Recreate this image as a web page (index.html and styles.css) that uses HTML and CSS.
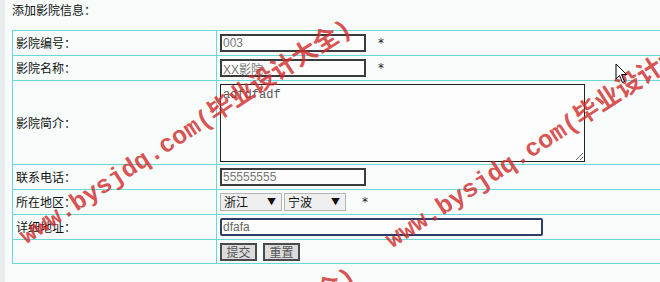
FILE: index.html
```html
<!DOCTYPE html>
<html lang="zh-CN">
<head>
  <meta charset="UTF-8">
  <title>添加影院信息</title>
  <link rel="stylesheet" href="styles.css">
</head>
<body>
  <div class="page">
    <div class="caption">添加影院信息：</div>

    <table class="form-table">
      <tr>
        <td class="label">影院编号：</td>
        <td class="field"><input class="text short" type="text" value="003"><span class="req">*</span></td>
      </tr>
      <tr>
        <td class="label">影院名称：</td>
        <td class="field"><input class="text short" type="text" value="XX影院"><span class="req">*</span></td>
      </tr>
      <tr class="tall">
        <td class="label">影院简介：</td>
        <td class="field"><textarea class="intro">adfdfadf</textarea></td>
      </tr>
      <tr>
        <td class="label">联系电话：</td>
        <td class="field"><input class="text short" type="text" value="55555555"></td>
      </tr>
      <tr>
        <td class="label">所在地区：</td>
        <td class="field">
          <span class="pick"><select><option>浙江</option></select></span><span class="pick"><select><option>宁波</option></select></span><span class="req req-wide">*</span>
        </td>
      </tr>
      <tr>
        <td class="label">详细地址：</td>
        <td class="field"><input class="text long focus" type="text" value="dfafa"></td>
      </tr>
      <tr class="last">
        <td class="label"></td>
        <td class="field"><button class="btn">提交</button><button class="btn">重置</button></td>
      </tr>
    </table>

    <!-- watermark -->
    <div class="mark mark-a">www.bysjdq.com(毕业设计大全)</div>
    <div class="mark mark-b">www.bysjdq.com(毕业设计大全)</div>
    <div class="mark mark-c">www.bysjdq.com(毕业设计大全)</div>

    <svg class="cursor" width="13" height="21" viewBox="0 0 13 21">
      <path d="M1 1 L1 16 L4.5 12.5 L7.5 19.5 L9.5 18.5 L6.5 11.5 L11.5 11.5 Z" fill="#fff" stroke="#000" stroke-width="1"/>
    </svg>
  </div>
</body>
</html>
```

FILE: styles.css
```css
html, body {
  margin: 0;
  padding: 0;
  height: 100%;
  overflow: hidden;
}

body {
  background: #f7fcfb;
  color: #111;
  font-family: "Noto Sans CJK SC", sans-serif;
  font-size: 12px;
}

.page {
  position: relative;
  height: 100%;
  box-sizing: border-box;
  padding: 0 0 0 7px;
  border-left: 5px solid #e8ecec;
}

.caption {
  line-height: 17px;
  padding-top: 1px;
  margin-bottom: 12px;
}

/* form table */
.form-table {
  border-collapse: collapse;
  width: 720px;
}

.form-table td {
  border: 1px solid #6ad8d8;
  height: 24px;
  padding: 0 3px;
  line-height: 16px;
}

.form-table .label {
  width: 197px;
}

.form-table .tall td {
  height: 83px;
}

.form-table .last td {
  height: 23px;
}

.text {
  box-sizing: border-box;
  height: 18px;
  margin: 0;
  padding: 0 1px;
  border: 2px solid #3b3b3b;
  background: #fdfdfd;
  color: #777;
  font-family: "Liberation Sans", "Noto Sans CJK SC", sans-serif;
  font-size: 12px;
  vertical-align: middle;
  outline: none;
}

.short {
  width: 146px;
}

.long {
  width: 323px;
}

.focus {
  border-color: #2d3d6a;
  border-radius: 2px;
  color: #666;
}

.req {
  margin-left: 12px;
  vertical-align: middle;
  font-family: "DejaVu Sans", sans-serif;
  font-size: 12px;
  color: #222;
}

.req-wide {
  margin-left: 14px;
}

.intro {
  display: block;
  box-sizing: border-box;
  width: 365px;
  height: 78px;
  margin: 0;
  padding: 3px 2px 1px;
  border: 1px solid #222;
  background: #fdfdfd;
  color: #555;
  font-family: "Liberation Mono", monospace;
  font-size: 12px;
}

/* region selects */
.pick {
  position: relative;
  display: inline-block;
  vertical-align: middle;
  margin-right: 2px;
}

.pick select {
  appearance: none;
  -webkit-appearance: none;
  box-sizing: border-box;
  width: 62px;
  height: 18px;
  margin: 0;
  padding: 0 0 0 3px;
  border: 1px solid #b5b5b5;
  background: #efefef;
  color: #111;
  font-family: "Noto Sans CJK SC", sans-serif;
  font-size: 12px;
  line-height: 16px;
}

.pick::after {
  content: "▼";
  position: absolute;
  right: 6px;
  top: 3px;
  font-size: 9px;
  line-height: 12px;
  color: #111;
  pointer-events: none;
}

/* buttons */
.btn {
  box-sizing: border-box;
  width: 37px;
  height: 18px;
  margin: 0 6px 0 0;
  padding: 0;
  border: 2px solid #4a4a4a;
  background: #dcdcdc;
  color: #555;
  font-family: "Noto Sans CJK SC", sans-serif;
  font-size: 12px;
  line-height: 14px;
  vertical-align: middle;
}

/* diagonal watermark */
.mark {
  position: absolute;
  white-space: nowrap;
  font-family: "Liberation Mono", "Noto Sans CJK SC", monospace;
  font-size: 25px;
  font-weight: bold;
  line-height: 30px;
  color: rgba(210, 45, 45, 0.82);
  transform-origin: left bottom;
  transform: rotate(-33deg);
  pointer-events: none;
}

.mark-a {
  left: 26px;
  top: 222px;
}

.mark-b {
  left: 392px;
  top: 226px;
}

.mark-c {
  left: 30px;
  top: 470px;
}

.cursor {
  position: absolute;
  left: 610px;
  top: 63px;
}
```
